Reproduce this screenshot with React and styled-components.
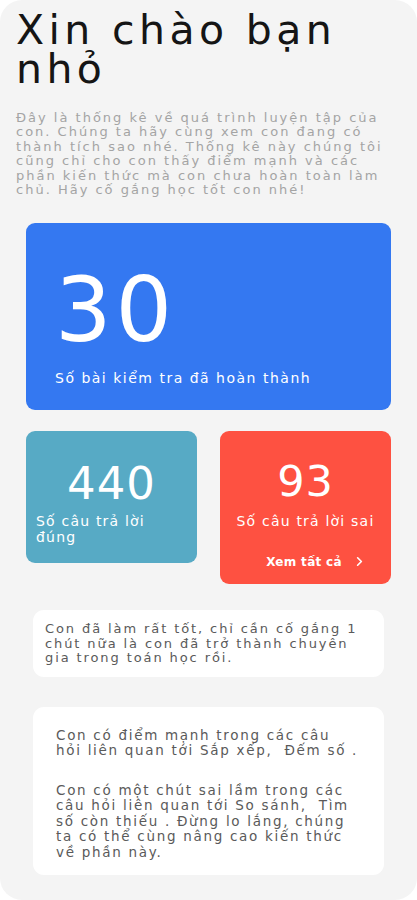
import React from "react";
import styled, { createGlobalStyle } from "styled-components";
import { ChevronRight } from "lucide-react";

const GlobalStyle = createGlobalStyle`
  body {
    margin: 0;
    background: #ffffff;
    font-family: "DejaVu Sans", "Noto Sans", sans-serif;
  }
`;

export default function App() {
  return (
    <>
      <GlobalStyle />
      <Screen>
        <Title>Xin chào bạn nhỏ</Title>
        <Intro>
          Đây là thống kê về quá trình luyện tập của con. Chúng ta hãy cùng
          xem con đang có thành tích sao nhé. Thống kê này chúng tôi cũng chỉ
          cho con thấy điểm mạnh và các phần kiến thức mà con chưa hoàn toàn
          làm chủ. Hãy cố gắng học tốt con nhé!
        </Intro>

        <BigCard>
          <BigNumber>30</BigNumber>
          <CardLabel>Số bài kiểm tra đã hoàn thành</CardLabel>
        </BigCard>

        <StatRow>
          <StatCard color="#57aac5" height="132px" top="29px">
            <StatNumber size="45px">440</StatNumber>
            <StatLabel gap="5px">Số câu trả lời đúng</StatLabel>
          </StatCard>
          <StatCard color="#fe5141" height="153px" top="26px" centered>
            <StatNumber size="43px">93</StatNumber>
            <StatLabel gap="8px">Số câu trả lời sai</StatLabel>
            <MoreLink>
              Xem tất cả <ChevronRight size={15} strokeWidth={2.6} />
            </MoreLink>
          </StatCard>
        </StatRow>

        <Note>
          Con đã làm rất tốt, chỉ cần cố gắng 1 chút nữa là con đã trở thành
          chuyên gia trong toán học rồi.
        </Note>

        <Note padded>
          <p>
            Con có điểm mạnh trong các câu hỏi liên quan tới Sắp xếp, &nbsp;Đếm
            số .
          </p>
          <p>
            Con có một chút sai lầm trong các câu hỏi liên quan tới So sánh,
            &nbsp;Tìm số còn thiếu . Đừng lo lắng, chúng ta có thể cùng nâng
            cao kiến thức về phần này.
          </p>
        </Note>
      </Screen>
    </>
  );
}

const Screen = styled.div`
  box-sizing: border-box;
  width: 417px;
  min-height: 900px;
  background: #f4f4f4;
  border-radius: 22px;
  padding: 11px 16px 24px;
`;

const Title = styled.h1`
  margin: 0;
  width: 345px;
  font-size: 41px;
  line-height: 39px;
  font-weight: 400;
  letter-spacing: 4.4px;
  color: #151515;
`;

const Intro = styled.p`
  margin: 22px 10px 0 0;
  font-size: 13px;
  line-height: 14.4px;
  letter-spacing: 2px;
  color: #a4a4a4;
`;

const BigCard = styled.div`
  box-sizing: border-box;
  height: 187px;
  margin: 26px 10px 0;
  padding: 42px 30px 0 29px;
  border-radius: 9px;
  background: #3478f1;
  color: #fff;
`;

const BigNumber = styled.div`
  font-size: 89px;
  line-height: 90px;
  letter-spacing: 4px;
`;

const CardLabel = styled.div`
  margin-top: 15px;
  font-size: 14px;
  line-height: 16px;
  letter-spacing: 1.5px;
`;

const StatRow = styled.div`
  display: flex;
  align-items: flex-start;
  gap: 23px;
  margin: 21px 10px 0;
`;

const StatCard = styled.div`
  box-sizing: border-box;
  flex: 1;
  height: ${({ height }) => height};
  padding: ${({ top }) => top} 10px 0;
  border-radius: 9px;
  background: ${({ color }) => color};
  color: #fff;
  text-align: ${({ centered }) => (centered ? "center" : "left")};
`;

const StatNumber = styled.div`
  text-align: center;
  font-size: ${({ size }) => size};
  line-height: 48px;
  letter-spacing: 1px;
`;

const StatLabel = styled.div`
  margin-top: ${({ gap }) => gap};
  font-size: 14px;
  line-height: 16px;
  letter-spacing: 1.2px;
`;

const MoreLink = styled.div`
  display: flex;
  align-items: center;
  justify-content: center;
  gap: 10px;
  margin-top: 25px;
  padding-left: 22px;
  font-size: 12px;
  line-height: 14px;
  font-weight: 700;
  letter-spacing: 0.3px;
`;

const Note = styled.div`
  box-sizing: border-box;
  margin: ${({ padded }) => (padded ? "30px 17px 0" : "26px 17px 0")};
  padding: ${({ padded }) => (padded ? "21px 24px 15px 23px" : "12px 20px 11px 12px")};
  border-radius: 11px;
  background: #ffffff;
  font-size: ${({ padded }) => (padded ? "13.5px" : "13px")};
  line-height: ${({ padded }) => (padded ? "15.5px" : "14.5px")};
  letter-spacing: ${({ padded }) => (padded ? "1.7px" : "1.9px")};
  color: #5a5a5a;

  p {
    margin: 0;
  }
  p + p {
    margin-top: 24px;
  }
`;
